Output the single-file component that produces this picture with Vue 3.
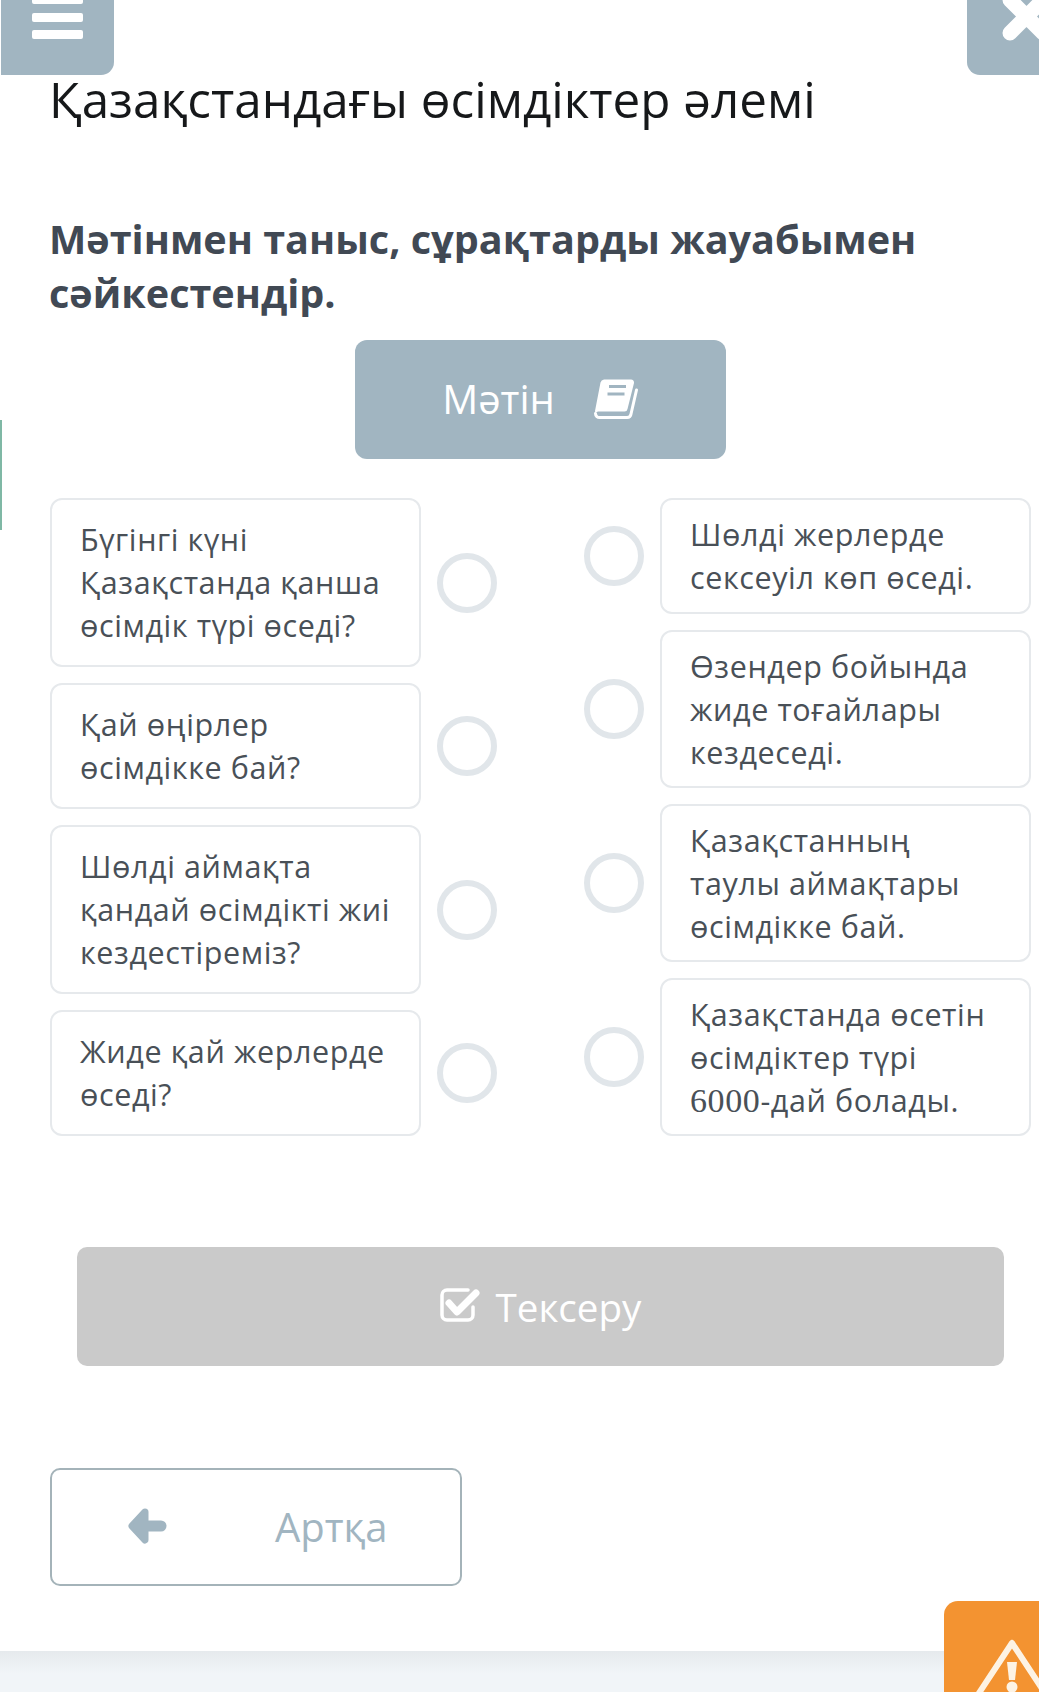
<template>
  <div class="page">
    <span class="side-mark"></span>

    <header class="topbar">
      <button class="top-btn menu" type="button" aria-label="Мәзір">
        <i></i><i></i><i></i>
      </button>
      <button class="top-btn close" type="button" aria-label="Жабу">
        <svg width="72" height="75" viewBox="0 0 72 75">
          <path d="M43 0 L76 33 M76 0 L43 33" stroke="#fff" stroke-width="15" stroke-linecap="round" />
        </svg>
      </button>
    </header>

    <main class="content">
      <h1 class="title">Қазақстандағы өсімдіктер әлемі</h1>
      <h2 class="task">Мәтінмен таныс, сұрақтарды жауабымен сәйкестендір.</h2>

      <button class="text-btn" type="button">
        <span>Мәтін</span>
        <svg width="46" height="42" viewBox="0 0 46 42">
          <path d="M11 1.500h27a3 3 0 0 1 3 3.500L34.500 31a3 3 0 0 1-3 2.500H5.500a3 3 0 0 0-3 2L2 33 7.500 4.500a4 4 0 0 1 3.500-3z" fill="#fff" />
          <path d="M43.500 12 38 36a4 4 0 0 1-4 3.500H7a4 4 0 0 1-4.500-4" fill="none" stroke="#fff" stroke-width="3" stroke-linecap="round" />
          <path d="M16 8.500h17M14.500 16h17" stroke="#a1b5c1" stroke-width="3" />
        </svg>
      </button>

      <section class="match">
        <div class="col">
          <div v-for="q in questions" :key="q" class="row">
            <div class="card question">{{ q }}</div>
            <span class="dot"></span>
          </div>
        </div>
        <div class="col answers">
          <div v-for="(a, i) in answers" :key="i" class="row">
            <span class="dot"></span>
            <div class="card answer">
              {{ a.text }}<span v-if="a.num" class="num">{{ a.num }}</span>{{ a.tail }}
            </div>
          </div>
        </div>
      </section>

      <button class="check-btn" type="button">
        <svg width="40" height="34" viewBox="0 0 40 34">
          <path d="M33 19v8a5 5 0 0 1-5 5H7a5 5 0 0 1-5-5V7a5 5 0 0 1 5-5h21" fill="none" stroke="#fff" stroke-width="3.500" stroke-linecap="round" />
          <path d="M9 15 17 24 36 5" fill="none" stroke="#fff" stroke-width="7" stroke-linecap="round" stroke-linejoin="round" />
        </svg>
        <span>Тексеру</span>
      </button>

      <button class="back-btn" type="button">
        <svg width="40" height="38" viewBox="0 0 40 38">
          <path d="M18 5 5 19 18 33z" fill="#a1b5c1" stroke="#a1b5c1" stroke-width="7" stroke-linejoin="round" />
          <path d="M12 19h22" stroke="#a1b5c1" stroke-width="11" stroke-linecap="round" />
        </svg>
        <span>Артқа</span>
      </button>
    </main>

    <footer class="footer"></footer>

    <div class="report">
      <svg width="95" height="91" viewBox="0 0 95 91">
        <path d="M68 42 8 133M68 42 128 133" fill="none" stroke="#fdf3e4" stroke-width="6" stroke-linecap="round" />
        <path d="M63 61h10l-2 18h-6z" fill="#fdf3e4" />
        <circle cx="68" cy="86" r="5.500" fill="#fdf3e4" />
      </svg>
    </div>
  </div>
</template>

<script setup>
const questions = [
  'Бүгінгі күні Қазақстанда қанша өсімдік түрі өседі?',
  'Қай өңірлер өсімдікке бай?',
  'Шөлді аймақта қандай өсімдікті жиі кездестіреміз?',
  'Жиде қай жерлерде өседі?'
]

const answers = [
  { text: 'Шөлді жерлерде сексеуіл көп өседі.' },
  { text: 'Өзендер бойында жиде тоғайлары кездеседі.' },
  { text: 'Қазақстанның таулы аймақтары өсімдікке бай.' },
  { text: 'Қазақстанда өсетін өсімдіктер түрі ', num: '6000', tail: '-дай болады.' }
]
</script>

<style>
body {
  background: #fff;
}
</style>

<style scoped>
.page {
  position: relative;
  width: 1039px;
  height: 1692px;
  overflow: hidden;
  background: #fff;
  font-family: "Open Sans", "Noto Sans", sans-serif;
  color: #495057;
}

.side-mark {
  position: absolute;
  left: 0;
  top: 420px;
  width: 2px;
  height: 110px;
  background: #7fb8a5;
}

.topbar {
  display: flex;
  justify-content: space-between;
  padding-left: 1px;
}

.top-btn {
  display: block;
  height: 75px;
  padding: 0;
  border: none;
  background: #a1b5c1;
  overflow: hidden;
}

.menu {
  width: 113px;
  border-radius: 0 0 13px 0;
  display: flex;
  flex-direction: column;
  align-items: center;
  gap: 8px;
}

.menu i {
  display: block;
  flex: none;
  width: 51px;
  height: 9px;
  border-radius: 2px;
  background: #fff;
}

.menu i:first-child {
  height: 4px;
  border-radius: 0 0 2px 2px;
}

.menu i:nth-child(2) {
  margin-top: 1px;
}

.close {
  width: 72px;
  border-radius: 0 0 0 13px;
}

.close svg {
  display: block;
}

.content {
  height: 1576px;
  padding-left: 50px;
}

.title {
  height: 50px;
  margin: 0 0 0 -1px;
  font-size: 49.4px;
  line-height: 48px;
  font-weight: 400;
  color: #16181a;
}

.task {
  width: 960px;
  margin: 87px 0 0 -1px;
  font-size: 39.6px;
  line-height: 54px;
  font-weight: 700;
  color: #414954;
}

.text-btn {
  display: flex;
  align-items: center;
  justify-content: center;
  gap: 38px;
  width: 371px;
  height: 119px;
  margin: 20px 0 0 305px;
  padding: 0 0 2px;
  border: none;
  border-radius: 12px;
  background: #a1b5c1;
  color: #fff;
  font: 400 40px "Open Sans", sans-serif;
}

.match {
  display: flex;
  gap: 87px;
  margin-top: 39px;
}

.col {
  display: flex;
  flex-direction: column;
  gap: 16px;
}

.row {
  display: flex;
  align-items: center;
  gap: 16px;
}

.card {
  box-sizing: border-box;
  width: 371px;
  padding: 18px 28px;
  border: 2px solid #e6e9ec;
  border-radius: 12px;
  font-size: 30.5px;
  line-height: 43px;
  letter-spacing: 0.6px;
  color: #495057;
}

.answer {
  padding-top: 12.5px;
  padding-bottom: 12.5px;
}

.answers .row:first-child .answer {
  padding-top: 13px;
  padding-bottom: 13px;
}

.num {
  font-family: "Liberation Serif", serif;
  font-size: 34px;
}

.dot {
  flex: none;
  box-sizing: border-box;
  width: 60px;
  height: 60px;
  border: 6px solid #e1e6ea;
  border-radius: 50%;
}

.check-btn {
  display: flex;
  align-items: center;
  justify-content: center;
  gap: 16px;
  width: 927px;
  height: 119px;
  margin: 111px 0 0 27px;
  padding: 0;
  border: none;
  border-radius: 10px;
  background: #cacaca;
  color: #fff;
  font: 400 38.6px "Open Sans", sans-serif;
}

.check-btn svg {
  margin-bottom: 4px;
}

.back-btn {
  display: flex;
  align-items: center;
  box-sizing: border-box;
  width: 412px;
  height: 118px;
  margin: 102px 0 0;
  padding: 0 0 2px 75px;
  border: 2px solid #a4b3b9;
  border-radius: 10px;
  background: #fff;
  color: #a1b5c1;
  font: 400 40px "Open Sans", sans-serif;
}

.back-btn span {
  margin-left: 108px;
}

.footer {
  height: 41px;
  background: linear-gradient(#e6eaed, #f1f5f8 55%);
}

.report {
  position: absolute;
  left: 944px;
  top: 1601px;
  width: 95px;
  height: 91px;
  border-radius: 14px 0 0 0;
  background: #f39331;
  overflow: hidden;
}

.report svg {
  display: block;
}
</style>
